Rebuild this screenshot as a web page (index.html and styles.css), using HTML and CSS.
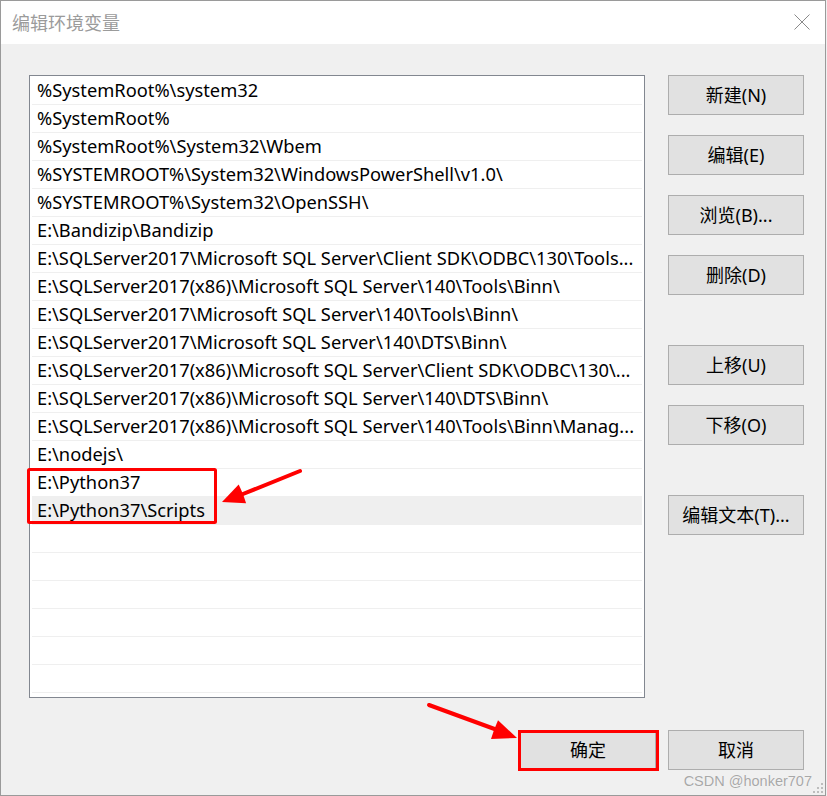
FILE: index.html
```html
<!DOCTYPE html>
<html lang="zh-CN">
<head>
<meta charset="utf-8">
<title>编辑环境变量</title>
<link rel="stylesheet" href="styles.css">
</head>
<body>
<div class="dialog">
  <div class="titlebar">
    <span class="title">编辑环境变量</span>
    <svg class="close" width="16" height="16" viewBox="0 0 16 16"><path d="M0.5 0.5 L15.5 15.5 M15.5 0.5 L0.5 15.5" stroke="#8a8a8a" stroke-width="1" fill="none"/></svg>
  </div>
  <div class="body">
    <div class="main">
      <div class="listbox">
        <div class="row">%SystemRoot%\system32</div>
        <div class="row">%SystemRoot%</div>
        <div class="row">%SystemRoot%\System32\Wbem</div>
        <div class="row">%SYSTEMROOT%\System32\WindowsPowerShell\v1.0\</div>
        <div class="row">%SYSTEMROOT%\System32\OpenSSH\</div>
        <div class="row">E:\Bandizip\Bandizip</div>
        <div class="row">E:\SQLServer2017\Microsoft SQL Server\Client SDK\ODBC\130\Tools...</div>
        <div class="row">E:\SQLServer2017(x86)\Microsoft SQL Server\140\Tools\Binn\</div>
        <div class="row">E:\SQLServer2017\Microsoft SQL Server\140\Tools\Binn\</div>
        <div class="row">E:\SQLServer2017\Microsoft SQL Server\140\DTS\Binn\</div>
        <div class="row">E:\SQLServer2017(x86)\Microsoft SQL Server\Client SDK\ODBC\130\...</div>
        <div class="row">E:\SQLServer2017(x86)\Microsoft SQL Server\140\DTS\Binn\</div>
        <div class="row">E:\SQLServer2017(x86)\Microsoft SQL Server\140\Tools\Binn\Manag...</div>
        <div class="row">E:\nodejs\</div>
        <div class="row">E:\Python37</div>
        <div class="row selected">E:\Python37\Scripts</div>
        <div class="row"></div>
        <div class="row"></div>
        <div class="row"></div>
        <div class="row"></div>
        <div class="row"></div>
        <div class="row"></div>
        <div class="row"></div>
      </div>
      <div class="side">
        <div class="group">
          <button class="btn">新建(N)</button>
          <button class="btn">编辑(E)</button>
          <button class="btn">浏览(B)...</button>
          <button class="btn">删除(D)</button>
        </div>
        <div class="group">
          <button class="btn">上移(U)</button>
          <button class="btn">下移(O)</button>
        </div>
        <div class="group">
          <button class="btn">编辑文本(T)...</button>
        </div>
      </div>
    </div>
    <div class="footer">
      <button class="btn ok">确定</button>
      <button class="btn">取消</button>
    </div>
    <div class="watermark">CSDN @honker707</div>
    <svg class="grip" width="10" height="10" viewBox="0 0 10 10">
      <rect x="8" y="0" width="2" height="2" fill="#bdbdbd"/>
      <rect x="4" y="4" width="2" height="2" fill="#bdbdbd"/>
      <rect x="8" y="4" width="2" height="2" fill="#bdbdbd"/>
      <rect x="0" y="8" width="2" height="2" fill="#bdbdbd"/>
      <rect x="4" y="8" width="2" height="2" fill="#bdbdbd"/>
      <rect x="8" y="8" width="2" height="2" fill="#bdbdbd"/>
    </svg>
  </div>
</div>
<svg class="annot" width="827" height="796" viewBox="0 0 827 796">
  <rect x="28.5" y="469.5" width="187" height="53" fill="none" stroke="#ff0000" stroke-width="3" rx="1"/>
  <line x1="300" y1="471" x2="238" y2="496" stroke="#ff0000" stroke-width="4" stroke-linecap="round"/>
  <polygon points="222,502 238.7,484.6 243,494 246.1,503.2" fill="#ff0000"/>
  <line x1="429" y1="705" x2="500" y2="731" stroke="#ff0000" stroke-width="4" stroke-linecap="round"/>
  <polygon points="517,738 498,720.2 494,730 491,739" fill="#ff0000"/>
  <rect x="519.5" y="731.5" width="138" height="38" fill="none" stroke="#ff0000" stroke-width="3"/>
</svg>
</body>
</html>
```

FILE: styles.css
```css
html, body {
  margin: 0;
  padding: 0;
}
body {
  width: 827px;
  height: 796px;
  background: #f0f0f0;
  position: relative;
  overflow: hidden;
  font-family: "Noto Sans", "Noto Sans CJK SC", sans-serif;
}
.dialog {
  width: 826px;
  height: 796px;
  box-sizing: border-box;
  border: 1px solid #9a9a9a;
  background: #f0f0f0;
  display: flex;
  flex-direction: column;
}
.titlebar {
  height: 43px;
  background: #ffffff;
  display: flex;
  align-items: center;
  justify-content: space-between;
  padding: 0 15px 0 11px;
  flex: none;
}
.title {
  font-family: "Noto Sans CJK SC", sans-serif;
  font-size: 18px;
  color: #9b9b9b;
  margin-top: -2px;
}
.close {
  display: block;
  margin-top: -1px;
}
.body {
  flex: 1;
  position: relative;
  padding: 31px 0 0 28px;
}
.main {
  display: flex;
  gap: 23px;
  height: 623px;
}
.listbox {
  width: 616px;
  height: 623px;
  box-sizing: border-box;
  border: 1px solid #828790;
  background: #ffffff;
  padding: 0 2px;
  overflow: hidden;
}
.row {
  height: 28px;
  box-sizing: border-box;
  border-top: 1px solid #efefef;
  padding-left: 5px;
  line-height: 26px;
  font-size: 18.3px;
  color: #000;
  white-space: nowrap;
  overflow: hidden;
}
.row:first-child {
  border-top-color: transparent;
}
.row.selected {
  background: #efefef;
}
.side {
  display: flex;
  flex-direction: column;
  gap: 50px;
}
.group {
  display: flex;
  flex-direction: column;
  gap: 20px;
}
.btn {
  width: 136px;
  height: 40px;
  box-sizing: border-box;
  border: 1px solid #adadad;
  background: #e1e1e1;
  font-family: "Noto Sans", "Noto Sans CJK SC", sans-serif;
  font-size: 18px;
  color: #000;
  padding: 0;
  margin: 0;
  line-height: 36px;
}
.footer {
  display: flex;
  gap: 12px;
  margin: 32px 0 0 491px;
}
.watermark {
  position: absolute;
  right: 13px;
  bottom: 6px;
  font-family: "Liberation Sans", sans-serif;
  font-size: 14.5px;
  color: #a8a8a8;
  text-shadow: 0 0 1px #ffffff;
}
.grip {
  position: absolute;
  right: 2px;
  bottom: 2px;
  display: block;
}
.annot {
  position: absolute;
  left: 0;
  top: 0;
  pointer-events: none;
}
```
